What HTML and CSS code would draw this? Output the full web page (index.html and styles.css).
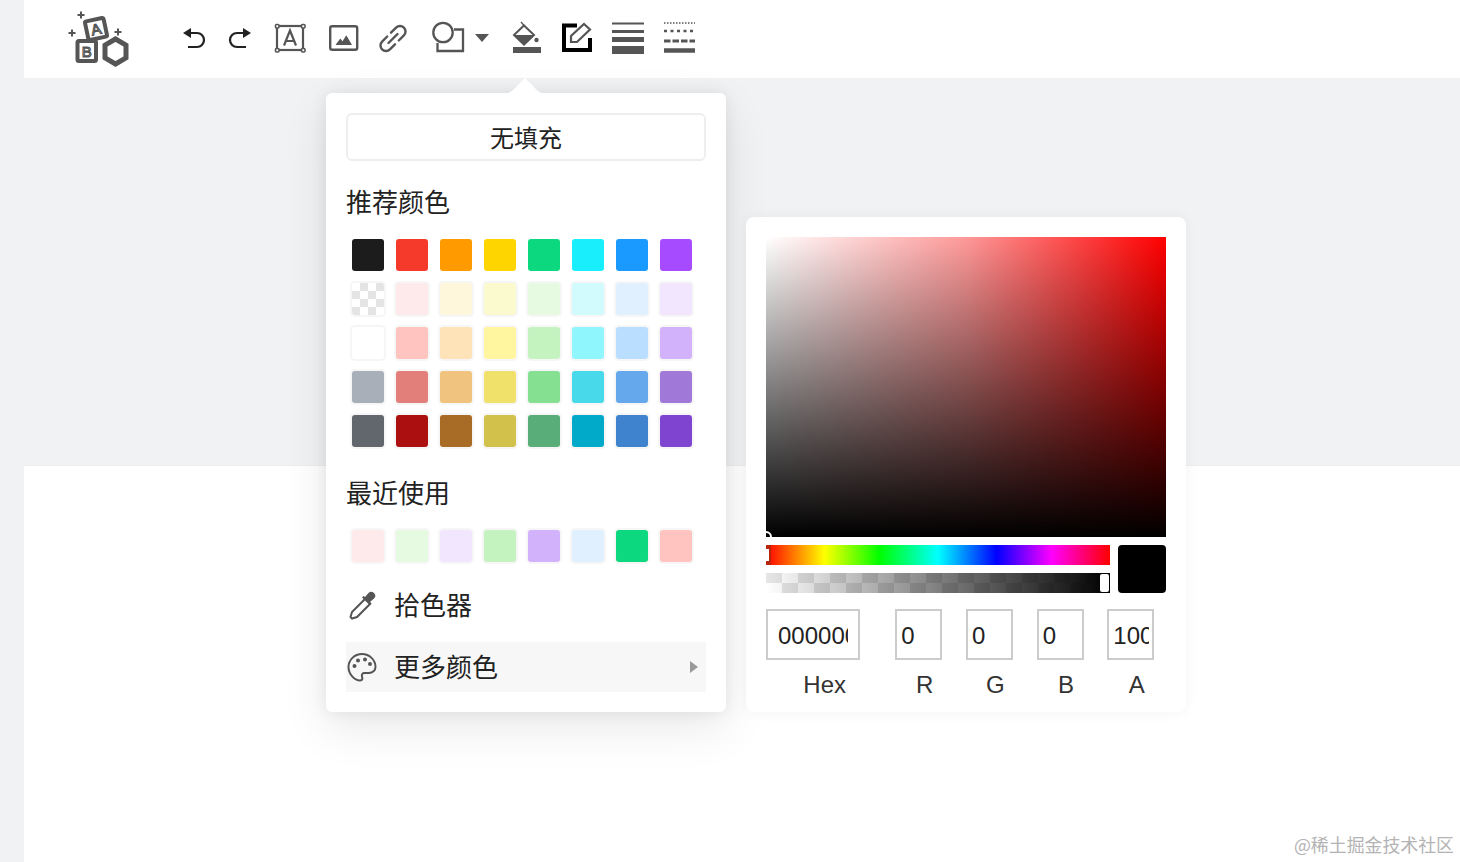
FILE: index.html
```html
<!DOCTYPE html>
<html lang="zh">
<head>
<meta charset="utf-8">
<title>Color picker</title>
<link rel="stylesheet" href="styles.css">
</head>
<body>
<div class="page">
  <aside class="gutter"></aside>
  <main class="main">
    <header class="toolbar">
      <svg class="tool w102" viewBox="68 0 102 78" fill="none">
        <g fill="#555"><path d="M80 11.500h2v2.500h2.500v2h-2.500v2.500h-2v-2.500h-2.500v-2h2.500z"/><path d="M71 29.500h2v2.500h2.500v2h-2.500v2.500h-2v-2.500h-2.500v-2h2.500z"/><path d="M117 28.500h2v2.500h2.500v2h-2.500v2.500h-2v-2.500h-2.500v-2h2.500z"/></g>
        <rect x="77.500" y="41" width="18.500" height="20" rx="1.500" fill="#fff" stroke="#555" stroke-width="4"/>
        <text x="86.800" y="57" class="logo-letter" text-anchor="middle">B</text>
        <g transform="rotate(-12 96 29)"><rect x="86.500" y="19.500" width="19" height="19" rx="1.500" fill="#fff" stroke="#555" stroke-width="4"/><text x="96" y="34.500" class="logo-letter" text-anchor="middle">A</text></g>
        <path d="M115.500 39l10.500 6.100v12.800l-10.500 6.100-10.500-6.100V45.100z" fill="#fff" stroke="#555" stroke-width="5"/>
      </svg>
      <svg class="tool w47" viewBox="170 0 47 78" fill="none" stroke="#222" stroke-width="2.200"><path d="M188 33h9a7 7 0 0 1 0 14h-9"/><path d="M183 33l8-5v10z" fill="#222" stroke="none"/></svg>
      <svg class="tool w45" viewBox="217 0 45 78" fill="none" stroke="#222" stroke-width="2.200"><path d="M246 33h-9a7 7 0 0 0 0 14h9"/><path d="M251 33l-8-5v10z" fill="#222" stroke="none"/></svg>
      <svg class="tool w55" viewBox="262 0 55 78" fill="none" stroke="#555" stroke-width="2.200"><rect x="277" y="26" width="26" height="24"/><g fill="#fff" stroke-width="1.600"><rect x="275.500" y="24.500" width="3.500" height="3.500" rx="1"/><rect x="301.500" y="24.500" width="3.500" height="3.500" rx="1"/><rect x="275.500" y="48.500" width="3.500" height="3.500" rx="1"/><rect x="301.500" y="48.500" width="3.500" height="3.500" rx="1"/></g><path d="M284 45.500l6-15 6 15M286 41h8" stroke-width="2.200"/></svg>
      <svg class="tool w50" viewBox="317 0 50 78" fill="none"><rect x="330.200" y="26.200" width="27" height="23.500" rx="2" stroke="#555" stroke-width="2.400"/><path d="M335.500 45l4.800-6.500 2.200 2.700 3.800-6 5.700 9.800z" fill="#555"/></svg>
      <svg class="tool w52" viewBox="367 0 52 78" fill="none" stroke="#555" stroke-width="2.400" stroke-linecap="round"><path d="M391 32.700l5.100-5.100a5.500 5.500 0 0 1 7.800 7.800l-5.100 5.100"/><path d="M387.200 36.500l-5.100 5.100a5.500 5.500 0 0 0 7.800 7.800l5.100-5.100"/><path d="M388.500 43l9-9"/></svg>
      <svg class="tool w51" viewBox="419 0 51 78" fill="none" stroke="#555" stroke-width="2.300"><path d="M454 29.500h9v21.500h-25.500v-8"/><circle cx="443" cy="32.500" r="9.700"/></svg>
      <svg class="tool w25" viewBox="470 0 25 78"><path d="M475 34h14l-7 8z" fill="#555"/></svg>
      <svg class="tool w57" viewBox="495 0 57 78"><path d="M513 47h28v6h-28z" fill="#555"/><path d="M524 25.500l10 9.500-10 9.500-10-9.500z" fill="#fff" stroke="#555" stroke-width="2"/><path d="M514 35h20l-10 9.500z" fill="#555"/><path d="M521 22l3.500 4" stroke="#555" stroke-width="1.400"/><circle cx="536.500" cy="40" r="2.200" fill="#555"/></svg>
      <svg class="tool w50" viewBox="552 0 50 78" fill="none"><path d="M577 25.500h-13v24.500h26V38" stroke="#000" stroke-width="4"/><path d="M571 42v-6l13-12 6 5.500-13 12.500z" stroke="#555" stroke-width="2.200"/></svg>
      <svg class="tool w52" viewBox="602 0 52 78" fill="#555"><rect x="612" y="22.500" width="32" height="2"/><rect x="612" y="30" width="32" height="3"/><rect x="612" y="37" width="32" height="5"/><rect x="612" y="46" width="32" height="8"/></svg>
      <svg class="tool w51" viewBox="654 0 51 78" fill="none" stroke="#555"><path d="M664 23h31" stroke-width="1.500" stroke-dasharray="1.500 1.500"/><path d="M664 31h31" stroke-width="2.500" stroke-dasharray="3 3.500"/><path d="M664 41h31" stroke-width="3" stroke-dasharray="6.500 2"/><path d="M664 50.500h31" stroke-width="4.500"/></svg>
    </header>
    <section class="canvas"></section>
    <section class="sheet"></section>
  </main>
</div>

<div class="popover">
  <svg class="popover-arrow" viewBox="0 0 48 17"><path d="M0 17c8 0 12-3 16-8l8-8 8 8c4 5 8 8 16 8z" fill="#fff"/></svg>
  <button class="no-fill">无填充</button>
  <h3 class="section-title first">推荐颜色</h3>
  <div class="swatches">
    <i class="swatch" style="background:#1c1c1c"></i><i class="swatch" style="background:#f5392b"></i><i class="swatch" style="background:#ff9a00"></i><i class="swatch" style="background:#ffd500"></i><i class="swatch" style="background:#0cd97f"></i><i class="swatch" style="background:#18eefc"></i><i class="swatch" style="background:#1a99ff"></i><i class="swatch" style="background:#a64bff"></i>
    <i class="swatch light checker"></i><i class="swatch light" style="background:#feeaea"></i><i class="swatch light" style="background:#fff7dc"></i><i class="swatch light" style="background:#fbf9ce"></i><i class="swatch light" style="background:#e5fae0"></i><i class="swatch light" style="background:#d2fbfe"></i><i class="swatch light" style="background:#e0f0ff"></i><i class="swatch light" style="background:#f1e6fe"></i>
    <i class="swatch light" style="background:#fff"></i><i class="swatch light" style="background:#ffc4c0"></i><i class="swatch light" style="background:#ffe3b8"></i><i class="swatch light" style="background:#fff69f"></i><i class="swatch light" style="background:#c5f3bf"></i><i class="swatch light" style="background:#8ff6fd"></i><i class="swatch light" style="background:#b9deff"></i><i class="swatch light" style="background:#d2b3fb"></i>
    <i class="swatch light" style="background:#a9afb8"></i><i class="swatch light" style="background:#e27f7b"></i><i class="swatch light" style="background:#f0c47e"></i><i class="swatch light" style="background:#f0e16b"></i><i class="swatch light" style="background:#86e092"></i><i class="swatch light" style="background:#48d9ea"></i><i class="swatch light" style="background:#65a9ec"></i><i class="swatch light" style="background:#a078d8"></i>
    <i class="swatch light" style="background:#62666d"></i><i class="swatch light" style="background:#ab0f0f"></i><i class="swatch light" style="background:#a96c27"></i><i class="swatch light" style="background:#d2c14a"></i><i class="swatch light" style="background:#58ad78"></i><i class="swatch light" style="background:#00aac8"></i><i class="swatch light" style="background:#3f83cf"></i><i class="swatch light" style="background:#8045d0"></i>
  </div>
  <h3 class="section-title">最近使用</h3>
  <div class="swatches">
    <i class="swatch light" style="background:#feeaea"></i><i class="swatch light" style="background:#e5fae0"></i><i class="swatch light" style="background:#f1e6fe"></i><i class="swatch light" style="background:#c5f3bf"></i><i class="swatch light" style="background:#d2b3fb"></i><i class="swatch light" style="background:#e0f0ff"></i><i class="swatch light" style="background:#0cd97f"></i><i class="swatch light" style="background:#ffc4c0"></i>
  </div>
  <div class="menu-row eyedrop">
    <svg class="menu-icon" viewBox="0 0 32 32" fill="none"><path d="M20 9l-14 14-1.500 5 1.500 1.500 5-1.500 14-14" stroke="#555" stroke-width="2"/><path d="M16 8.500l7.500 7.500 1.500-1.500-1-1.500 4-3.500a3.800 3.800 0 0 0-5.500-5.500l-3.500 4-1.500-1z" fill="#555"/></svg>
    <span>拾色器</span>
  </div>
  <div class="menu-row more">
    <svg class="menu-icon" viewBox="0 0 32 32" fill="none"><path d="M16 3C8.500 3 2.500 9 2.500 16S8.500 29.500 14 29.500c3 0 2.500-2.500 2-4-.700-2 .500-3.500 2.500-3.500h4.500c3.500 0 6.500-2.500 6.500-6C29.500 9 23.500 3 16 3z" stroke="#555" stroke-width="2"/><g fill="#555"><circle cx="8.500" cy="15" r="2"/><circle cx="12" cy="9.500" r="2"/><circle cx="19" cy="8.500" r="2"/><circle cx="24" cy="13" r="2"/></g></svg>
    <span>更多颜色</span>
    <svg class="menu-caret" viewBox="0 0 8 12"><path d="M0 0l8 6-8 6z" fill="#999"/></svg>
  </div>
</div>

<div class="picker">
  <div class="sat">
    <div class="sat-handle"></div>
  </div>
  <div class="sliders">
    <div class="bars">
      <div class="hue"><div class="hue-handle"></div></div>
      <div class="alpha"><div class="alpha-handle"></div></div>
    </div>
    <div class="preview"></div>
  </div>
  <div class="fields">
    <label class="field hex"><input value="000000"><span>Hex</span></label>
    <label class="field"><input value="0"><span>R</span></label>
    <label class="field"><input value="0"><span>G</span></label>
    <label class="field"><input value="0"><span>B</span></label>
    <label class="field"><input value="100"><span>A</span></label>
  </div>
</div>

<div class="watermark">@稀土掘金技术社区</div>
</body>
</html>
```
FILE: styles.css
```css
* { box-sizing: border-box; }
html, body { margin: 0; height: 100%; }
body {
  overflow: hidden;
  background: #fff;
  font-family: "Liberation Sans", "Noto Sans CJK SC", sans-serif;
  color: #222;
}
.page { display: flex; height: 862px; }
.gutter { width: 24px; background: #f1f2f4; }
.main { flex: 1; display: flex; flex-direction: column; }
.toolbar {
  height: 78px;
  display: flex;
  padding-left: 44px;
  background: #fff;
}
.tool { height: 78px; flex: none; }
.w102 { width: 102px; }
.w57 { width: 57px; }
.w55 { width: 55px; }
.w52 { width: 52px; }
.w51 { width: 51px; }
.w50 { width: 50px; }
.w47 { width: 47px; }
.w45 { width: 45px; }
.w25 { width: 25px; }
.logo-letter {
  font: 400 15px "Liberation Sans", sans-serif;
  fill: #fff;
  stroke: #555;
  stroke-width: 1.100;
}
.canvas { height: 388px; background: #f1f2f4; border-bottom: 1px solid #eceef0; }
.sheet { flex: 1; background: #fff; }

.popover {
  position: absolute;
  left: 326px;
  top: 93px;
  width: 400px;
  height: 619px;
  padding: 20px;
  background: #fff;
  border-radius: 6px;
  box-shadow: 0 0 16px rgba(0, 0, 0, .08), 0 16px 48px rgba(0, 0, 0, .09);
}
.popover-arrow {
  position: absolute;
  left: 175px;
  top: -16px;
  width: 48px;
  height: 17px;
}
.no-fill {
  display: block;
  width: 100%;
  height: 48px;
  padding: 0 0 1px;
  background: #fff;
  border: 2px solid #eeeeee;
  border-radius: 6px;
  font: 24px "Noto Sans CJK SC", sans-serif;
  color: #222;
}
.section-title {
  margin: 21px 0 14px;
  height: 36px;
  font: 400 26px/36px "Noto Sans CJK SC", sans-serif;
  color: #222;
}
.section-title.first { margin-top: 22px; }
.swatches { display: grid; grid-template-columns: repeat(8, 44px); grid-auto-rows: 44px; place-items: center; }
.swatch { display: block; width: 32px; height: 32px; border-radius: 3px; }
.swatch.light { box-shadow: 0 0 0 2px #f6f6f6; }
.checker {
  background: repeating-conic-gradient(#e4e4e4 0 25%, #fff 0 50%) 0 0 / 16px 16px;
}
.menu-row {
  display: flex;
  align-items: center;
  height: 50px;
  margin-top: 12px;
  font: 26px "Noto Sans CJK SC", sans-serif;
  color: #222;
}
.menu-row span { margin-top: -4px; }
.menu-row.more { background: #f7f7f7; }
.menu-icon { width: 32px; height: 32px; flex: none; margin-right: 16px; }
.menu-caret { width: 8px; height: 12px; margin-left: auto; margin-right: 8px; }

.picker {
  position: absolute;
  left: 746px;
  top: 217px;
  width: 440px;
  height: 495px;
  padding: 20px;
  background: #fff;
  border-radius: 8px;
  box-shadow: 0 0 14px rgba(0, 0, 0, .05);
}
.sat {
  position: relative;
  height: 300px;
  overflow: hidden;
  background:
    linear-gradient(to top, #000, rgba(0, 0, 0, 0)),
    linear-gradient(to right, #fff 0, rgba(255, 255, 255, .6) 50%, rgba(255, 255, 255, .3) 75%, rgba(255, 255, 255, 0) 100%),
    #f00;
}
.sat-handle {
  position: absolute;
  left: -6px;
  bottom: -6px;
  width: 12px;
  height: 12px;
  border: 2px solid #fff;
  border-radius: 50%;
}
.sliders { display: flex; gap: 8px; margin-top: 8px; }
.bars { flex: 1; display: flex; flex-direction: column; gap: 8px; }
.hue {
  height: 20px;
  background: linear-gradient(to right, #f00 0, #ff0 17%, #0f0 33%, #0ff 50%, #00f 67%, #f0f 83%, #f00 100%);
}
.hue-handle {
  width: 5px;
  height: 20px;
  background: #fff;
  border: solid #b5260c;
  border-width: 4px 2px 4px 0;
}
.alpha {
  position: relative;
  height: 20px;
  background:
    linear-gradient(to right, rgba(0, 0, 0, 0), #000),
    repeating-conic-gradient(#e6e6e6 0 25%, #fff 0 50%) 16px 0 / 32px 20px;
}
.alpha-handle {
  position: absolute;
  right: 1px;
  top: 1px;
  width: 9px;
  height: 18px;
  background: #fff;
  border-radius: 2px;
}
.preview { width: 48px; height: 48px; background: #000; border-radius: 4px; }
.fields { display: flex; margin-top: 16px; }
.field { flex: 1; padding-left: 12px; min-width: 0; font-size: 24px; color: #333; text-align: center; }
.field.hex { flex: 2; padding-left: 0; }
.field input {
  display: block;
  width: 80%;
  height: 51px;
  padding: 6px 3px 4px 4px;
  border: 2px solid #ccc;
  border-radius: 0;
  background: #fff;
  font: 24px "Liberation Sans", sans-serif;
  color: #222;
  outline: none;
}
.field.hex input { padding: 6px 10px 4px; }
.field span { display: block; margin-top: 11px; line-height: 28px; }

.watermark {
  position: absolute;
  right: 6px;
  bottom: 7px;
  font: 17.900px/22px "Noto Sans CJK SC", sans-serif;
  color: #b3b3b3;
  white-space: nowrap;
}
```
